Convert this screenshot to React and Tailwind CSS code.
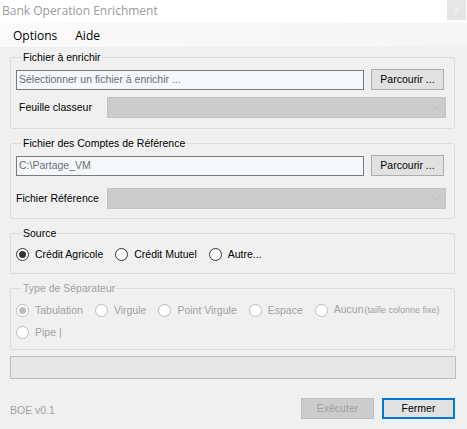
import { ChevronDown } from 'lucide-react'

function Group({ title, disabled, className = '', children }) {
  return (
    <fieldset className={`border border-[#dcdcdc] rounded-[2px] ${className}`}>
      <legend className={`ml-[6px] px-[1px] leading-[13px] ${disabled ? 'text-[#a0a0a0]' : 'text-black'}`}>
        {title}
      </legend>
      {children}
    </fieldset>
  )
}

function Button({ children, disabled, primary, className = '' }) {
  let tone = 'border border-[#adadad] bg-[#e1e1e1] text-black'
  if (disabled) tone = 'border border-[#bfbfbf] bg-[#cccccc] text-[#a0a0a0]'
  if (primary) tone = 'border-2 border-[#0078d7] bg-[#e1e1e1] text-black'
  return (
    <div className={`w-[73px] h-[21px] shrink-0 flex items-center justify-center ${tone} ${className}`}>
      {children}
    </div>
  )
}

function Combo({ className = '' }) {
  return (
    <div className={`h-[21px] bg-[#cccccc] border border-[#c2c2c2] flex items-center justify-end pr-[3px] ${className}`}>
      <ChevronDown size={13} strokeWidth={1} className="text-[#a8a8a8]" />
    </div>
  )
}

function Radio({ label, checked, disabled, extra, className = '' }) {
  const ring = disabled ? 'border-[#bcbcbc]' : 'border-[#333333]'
  const dot = disabled ? 'bg-[#bcbcbc]' : 'bg-[#333333]'
  return (
    <div className={`flex items-center whitespace-nowrap ${className}`}>
      <span className={`w-[13px] h-[13px] rounded-full border bg-white ${ring} flex items-center justify-center`}>
        {checked && <span className={`w-[7px] h-[7px] rounded-full ${dot}`} />}
      </span>
      <span className={`ml-[6px] ${disabled ? 'text-[#a0a0a0]' : 'text-black'}`}>
        {label}
        {extra && <span className="text-[9px] ml-[1px]">{extra}</span>}
      </span>
    </div>
  )
}

export default function App() {
  return (
    <div
      className="w-[467px] h-[429px] bg-[#f0f0f0] text-[10.5px] leading-[13px] overflow-hidden"
      style={{ fontFamily: '"Liberation Sans", Arial, sans-serif' }}
    >
      {/* Title bar */}
      <div className="h-[23px] bg-white flex items-start justify-between">
        <span
          className="pl-[2px] pt-[2px] text-[12px] leading-[18px] text-[#9a9a9a]"
          style={{ fontFamily: '"Open Sans", "Noto Sans", sans-serif' }}
        >
          Bank Operation Enrichment
        </span>
        <div className="w-[19px] h-[20px] mr-[1px] bg-[#e5e5e5] flex items-center justify-center text-[11px] text-[#f4f4f4]">
          x
        </div>
      </div>

      {/* Menu strip */}
      <div
        className="h-[24px] pt-[1px] bg-gradient-to-r from-[#fafafa] to-[#f5f5f5] flex items-center text-[12px] text-black"
        style={{ fontFamily: '"Open Sans", "Noto Sans", sans-serif' }}
      >
        <span className="ml-[13px]">Options</span>
        <span className="ml-[18px]">Aide</span>
      </div>

      <div className="flex flex-col pl-[10px] pr-[12px] pt-[4px]">
        <Group title="Fichier à enrichir" className="pl-[5px] pr-[9px] pb-[10px]">
          <div className="flex items-center mt-[5px]">
            <div className="w-[348px] h-[20px] border border-[#7a7a7a] bg-[#f4f8fb] flex items-center pl-[2px] text-[#6d6d6d]">
              Sélectionner un fichier à enrichir ...
            </div>
            <Button className="ml-[7px]">Parcourir ...</Button>
          </div>
          <div className="flex items-center mt-[7px]">
            <span className="w-[91px] shrink-0 pl-[3px] whitespace-nowrap">Feuille classeur</span>
            <Combo className="flex-1 -mr-[1px]" />
          </div>
        </Group>

        <Group title="Fichier des Comptes de Référence" className="mt-[8px] pl-[5px] pr-[9px] pb-[9px]">
          <div className="flex items-center mt-[5px]">
            <div className="w-[348px] h-[20px] border border-[#7a7a7a] bg-[#f4f8fb] flex items-center pl-[2px] text-[#6d6d6d]">
              C:\Partage_VM
            </div>
            <Button className="ml-[7px]">Parcourir ...</Button>
          </div>
          <div className="flex items-center mt-[12px]">
            <span className="w-[91px] shrink-0 whitespace-nowrap">Fichier Référence</span>
            <Combo className="flex-1 -mr-[1px]" />
          </div>
        </Group>

        <Group title="Source" className="mt-[8px] pl-[5px] pb-[12px]">
          <div className="flex items-center mt-[8px]">
            <Radio label="Crédit Agricole" checked />
            <Radio label="Crédit Mutuel" className="ml-[12px]" />
            <Radio label="Autre..." className="ml-[12px]" />
          </div>
        </Group>

        <Group title="Type de Séparateur" disabled className="mt-[8px] pl-[5px] pb-[10px]">
          <div className="flex items-center mt-[8px]">
            <Radio label="Tabulation" checked disabled />
            <Radio label="Virgule" disabled className="ml-[12px]" />
            <Radio label="Point Virgule" disabled className="ml-[12px]" />
            <Radio label="Espace" disabled className="ml-[12px]" />
            <Radio label="Aucun" extra="(taille colonne fixe)" disabled className="ml-[12px]" />
          </div>
          <div className="flex items-center mt-[9px]">
            <Radio label="Pipe |" disabled />
          </div>
        </Group>

        <div className="mt-[6px] h-[23px] mr-[-1px] bg-[#e6e6e6] border border-[#bcbcbc]" />

        <div className="flex items-center mt-[19px]">
          <span className="text-[#a0a0a0] mt-[3px]">BOE v0.1</span>
          <Button disabled className="ml-auto">Exécuter</Button>
          <Button primary className="ml-[8px]">Fermer</Button>
        </div>
      </div>
    </div>
  )
}
